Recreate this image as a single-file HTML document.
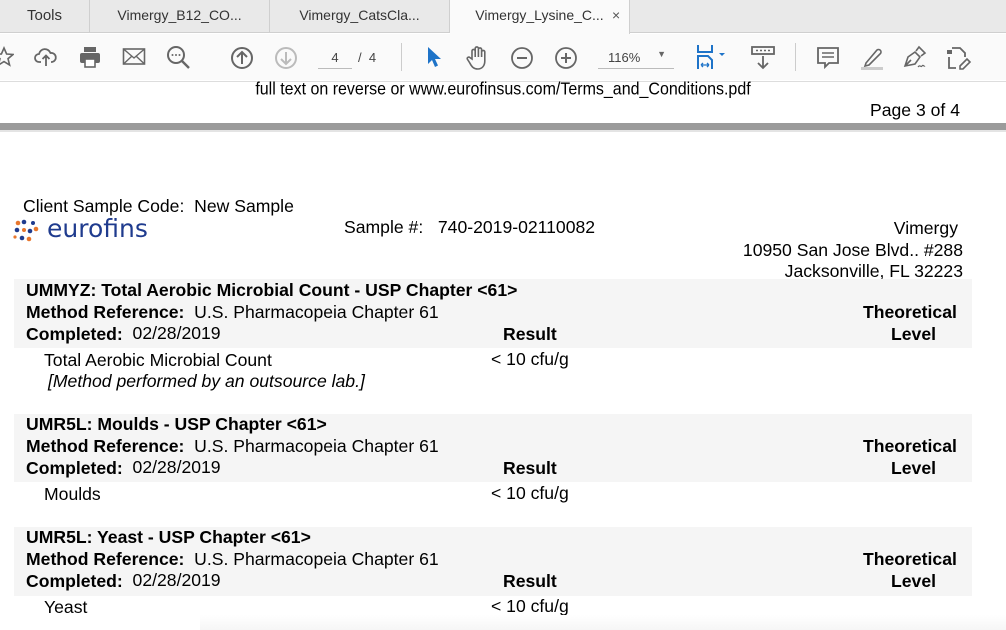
<!DOCTYPE html>
<html><head><meta charset="utf-8"><style>
body{margin:0;width:1006px;height:630px;overflow:hidden;background:#fff;font-family:"Liberation Sans",Arial,sans-serif;position:relative}
.a{position:absolute;white-space:nowrap}
.t{font-size:17.6px;color:#000;line-height:22px}
.b{font-weight:bold}
.tab{position:absolute;top:0;height:33px;line-height:31px;font-size:14px;color:#333;text-align:center;border-right:1px solid #cfcfcf;box-sizing:border-box}
.band{position:absolute;left:14px;width:958px;background:#f5f5f5}
svg{position:absolute}
</style></head><body>
<div class="a" style="left:0;top:0;width:1006px;height:33px;background:#e9e9e9;border-bottom:1px solid #cfcfcf;box-sizing:border-box"></div>
<div class="tab" style="left:0;width:90px;font-size:15px">Tools</div>
<div class="tab" style="left:90px;width:180px">Vimergy_B12_CO...</div>
<div class="tab" style="left:270px;width:180px">Vimergy_CatsCla...</div>
<div class="tab" style="left:450px;width:180px;background:#fafafa;height:34px;border-right:1px solid #cfcfcf">Vimergy_Lysine_C... <span style="position:absolute;left:162px;color:#555">×</span></div>
<div class="a" style="left:0;top:34px;width:1006px;height:46px;background:#fafafa"></div>
<svg style="left:-6px;top:46px" width="20" height="22" viewBox="0 0 20 22"><path d="M10 2l2.6 6 6.4.5-5 4.2 1.6 6.3L10 15.6 4.4 19l1.6-6.3-5-4.2 6.4-.5z" fill="none" stroke="#666" stroke-width="1.6"/></svg>
<svg style="left:34px;top:45px" width="24" height="24" viewBox="0 0 24 24"><path d="M7 17H5a4 4 0 010-8 6 6 0 0111.5-1A4.5 4.5 0 0118 17h-1M12 21V11M8.5 14l3.5-3.5 3.5 3.5" fill="none" stroke="#666" stroke-width="1.8"/></svg>
<svg style="left:78px;top:45px" width="24" height="24" viewBox="0 0 24 24"><rect x="6" y="2" width="12" height="5" fill="#666"/><rect x="2" y="8" width="20" height="10" rx="2" fill="#666"/><rect x="7" y="14" width="10" height="8" fill="#fff" stroke="#666" stroke-width="1.6"/></svg>
<svg style="left:122px;top:46px" width="24" height="22" viewBox="0 0 24 22"><rect x="1.5" y="3" width="21" height="15" fill="none" stroke="#666" stroke-width="1.6"/><path d="M1.5 3l10.5 9 10.5-9M1.5 18l8-7.5M22.5 18l-8-7.5" fill="none" stroke="#666" stroke-width="1.4"/></svg>
<svg style="left:166px;top:45px" width="26" height="26" viewBox="0 0 26 26"><circle cx="10" cy="10" r="8" fill="none" stroke="#666" stroke-width="2"/><path d="M16 16l7 7" stroke="#666" stroke-width="2.4"/><circle cx="6.5" cy="10" r="1" fill="#666"/><circle cx="10" cy="10" r="1" fill="#666"/><circle cx="13.5" cy="10" r="1" fill="#666"/></svg>
<svg style="left:230px;top:46px" width="24" height="24" viewBox="0 0 24 24"><circle cx="12" cy="12" r="10" fill="none" stroke="#666" stroke-width="2"/><path d="M12 18V6M7 11l5-5 5 5" fill="none" stroke="#666" stroke-width="2"/></svg>
<svg style="left:274px;top:46px" width="24" height="24" viewBox="0 0 24 24"><circle cx="12" cy="12" r="10" fill="none" stroke="#bbb" stroke-width="2"/><path d="M12 6v12M7 13l5 5 5-5" fill="none" stroke="#bbb" stroke-width="2"/></svg>
<div class="a" style="left:318px;top:50px;width:34px;text-align:center;font-size:13px;color:#444;border-bottom:1px solid #bbb;padding-bottom:3px">4</div>
<div class="a" style="left:358px;top:50px;font-size:13px;color:#444">/&nbsp; 4</div>
<div class="a" style="left:401px;top:43px;width:1px;height:28px;background:#ccc"></div>
<svg style="left:426px;top:46px" width="16" height="22" viewBox="0 0 16 22"><path d="M2 1v17l4-4 3 7 3-1.5-3-6.5h6z" fill="#1e73c8"/></svg>
<svg style="left:466px;top:45px" width="24" height="26" viewBox="0 0 24 26"><path d="M6 14V6a1.6 1.6 0 013.2 0v6V3.5a1.6 1.6 0 013.2 0V12V4.5a1.6 1.6 0 013.2 0V12V7a1.6 1.6 0 013.2 0v9c0 5-3 8-7 8s-6-2-8-6l-2.5-4a1.5 1.5 0 012.5-1.5z" fill="none" stroke="#666" stroke-width="1.6"/></svg>
<svg style="left:510px;top:46px" width="24" height="24" viewBox="0 0 24 24"><circle cx="12" cy="12" r="10" fill="none" stroke="#666" stroke-width="1.8"/><path d="M7 12h10" stroke="#666" stroke-width="2"/></svg>
<svg style="left:554px;top:46px" width="24" height="24" viewBox="0 0 24 24"><circle cx="12" cy="12" r="10" fill="none" stroke="#666" stroke-width="1.8"/><path d="M7 12h10M12 7v10" stroke="#666" stroke-width="2"/></svg>
<div class="a" style="left:598px;top:50px;width:76px;font-size:13px;color:#444;border-bottom:1px solid #bbb;padding-bottom:3px;padding-left:10px;box-sizing:border-box">116%<span style="position:absolute;right:8px;top:-1px;font-size:9px;color:#666">▼</span></div>
<svg style="left:696px;top:44px" width="34" height="26" viewBox="0 0 34 26"><path d="M2 1v7h14V1M2 25V12h10l4 4v9" fill="none" stroke="#1e73c8" stroke-width="2"/><path d="M5 21h8M5 21l2-2M5 21l2 2M13 21l-2-2M13 21l-2 2" stroke="#1e73c8" stroke-width="1.3" fill="none"/><path d="M23 9h6l-3 3z" fill="#1e73c8"/></svg>
<svg style="left:751px;top:45px" width="24" height="26" viewBox="0 0 24 26"><rect x="1" y="2" width="22" height="7" fill="none" stroke="#666" stroke-width="1.8"/><path d="M5 5.5h2M9 5.5h2M13 5.5h2M17 5.5h2" stroke="#666" stroke-width="1.6"/><path d="M12 11v12M7 18l5 5 5-5" fill="none" stroke="#666" stroke-width="1.8"/></svg>
<div class="a" style="left:795px;top:43px;width:1px;height:28px;background:#ccc"></div>
<svg style="left:816px;top:46px" width="24" height="24" viewBox="0 0 24 24"><path d="M2 2h20v15h-9l-4 4v-4H2z" fill="none" stroke="#666" stroke-width="1.8"/><path d="M6 7h12M6 11h12" stroke="#666" stroke-width="1.4"/></svg>
<svg style="left:860px;top:45px" width="26" height="26" viewBox="0 0 26 26"><path d="M6 18l11-13a2.5 2.5 0 013.5 3.5L9 20l-4 1z" fill="none" stroke="#666" stroke-width="1.6"/><rect x="1" y="22" width="22" height="3" fill="#ccc"/></svg>
<svg style="left:902px;top:45px" width="26" height="26" viewBox="0 0 26 26"><path d="M3 21l3-9 7-5 5 5-5 7zM3 21l6-6M14 6l3-4 6 6-4 3" fill="none" stroke="#666" stroke-width="1.6"/><path d="M16 22c2-3 3 1 4-1s2 1 3 0" fill="none" stroke="#666" stroke-width="1.2"/></svg>
<svg style="left:946px;top:45px" width="26" height="26" viewBox="0 0 26 26"><rect x="1" y="5" width="5" height="4" fill="#666"/><path d="M6 3h8l5 5v4M3 12v11h7" fill="none" stroke="#666" stroke-width="1.8"/><path d="M14 21l7-7 3 3-7 7h-3z" fill="none" stroke="#666" stroke-width="1.6"/></svg>

<div class="a" style="left:0;top:81px;width:1006px;height:1px;background:#ddd"></div>
<div class="a" style="left:0;top:80px;width:1006px;text-align:center;font-size:16px;line-height:20px;transform:scaleY(1.08)">full text on reverse or www.eurofinsus.com/Terms_and_Conditions.pdf</div>
<div class="a" style="left:870px;top:99px;font-size:17.6px;line-height:22px">Page 3 of 4</div>
<div class="a" style="left:0;top:123px;width:1006px;height:7px;background:#9b9b9b"></div>
<div class="a" style="left:0;top:130px;width:1006px;height:2px;background:#e4e4e4"></div>

<div class="a t" style="left:23px;top:195px">Client Sample Code:&nbsp; New Sample</div>
<svg style="left:13px;top:218px" width="30" height="26" viewBox="0 0 30 26"><g fill="#1f3b8e"><circle cx="11" cy="4" r="2.3"/><circle cx="4" cy="12" r="2.3"/><circle cx="17" cy="13" r="2.3"/><circle cx="9" cy="20" r="2.3"/><circle cx="20" cy="5" r="2"/></g><g fill="#e8772e"><circle cx="5" cy="5" r="2.3"/><circle cx="23" cy="11" r="2.3"/><circle cx="11" cy="12" r="2"/><circle cx="16" cy="21" r="2.3"/><circle cx="2" cy="19" r="1.6"/></g></svg>
<div class="a" style="left:47px;top:213px;font-size:25px;color:#1f3b8e;font-family:'DejaVu Sans',sans-serif;line-height:32px">eurofins</div>
<div class="a t" style="left:344px;top:216px">Sample #:&nbsp;&nbsp; 740-2019-02110082</div>
<div class="a t" style="right:48px;top:217px;text-align:right">Vimergy</div>
<div class="a t" style="right:43px;top:239px;text-align:right">10950 San Jose Blvd.. #288</div>
<div class="a t" style="right:43px;top:260px;text-align:right">Jacksonville, FL 32223</div>

<div class="band" style="top:279px;height:69px"></div>
<div class="band" style="top:414px;height:68px"></div>
<div class="band" style="top:527px;height:69px"></div>

<div class="a t b" style="left:26px;top:279px">UMMYZ: Total Aerobic Microbial Count - USP Chapter &lt;61&gt;</div>
<div class="a t" style="left:26px;top:301px"><b>Method Reference:</b>&nbsp; U.S. Pharmacopeia Chapter 61</div>
<div class="a t" style="left:26px;top:322px"><b style="position:relative;top:1px">Completed:</b>&nbsp; 02/28/2019</div>
<div class="a t b" style="left:503px;top:323px">Result</div>
<div class="a t b" style="left:863px;top:301px">Theoretical</div>
<div class="a t b" style="left:891px;top:323px">Level</div>
<div class="a t" style="left:44px;top:349px">Total Aerobic Microbial Count</div>
<div class="a t" style="left:491px;top:348px">&lt; 10 cfu/g</div>
<div class="a t" style="left:48px;top:370px;font-style:italic">[Method performed by an outsource lab.]</div>

<div class="a t b" style="left:26px;top:413px">UMR5L: Moulds - USP Chapter &lt;61&gt;</div>
<div class="a t" style="left:26px;top:435px"><b>Method Reference:</b>&nbsp; U.S. Pharmacopeia Chapter 61</div>
<div class="a t" style="left:26px;top:456px"><b style="position:relative;top:1px">Completed:</b>&nbsp; 02/28/2019</div>
<div class="a t b" style="left:503px;top:457px">Result</div>
<div class="a t b" style="left:863px;top:435px">Theoretical</div>
<div class="a t b" style="left:891px;top:457px">Level</div>
<div class="a t" style="left:44px;top:483px">Moulds</div>
<div class="a t" style="left:491px;top:482px">&lt; 10 cfu/g</div>

<div class="a t b" style="left:26px;top:526px">UMR5L: Yeast - USP Chapter &lt;61&gt;</div>
<div class="a t" style="left:26px;top:548px"><b>Method Reference:</b>&nbsp; U.S. Pharmacopeia Chapter 61</div>
<div class="a t" style="left:26px;top:569px"><b style="position:relative;top:1px">Completed:</b>&nbsp; 02/28/2019</div>
<div class="a t b" style="left:503px;top:570px">Result</div>
<div class="a t b" style="left:863px;top:548px">Theoretical</div>
<div class="a t b" style="left:891px;top:570px">Level</div>
<div class="a t" style="left:44px;top:596px">Yeast</div>
<div class="a t" style="left:491px;top:595px">&lt; 10 cfu/g</div>
<div class="a" style="left:200px;top:615px;width:806px;height:15px;background:linear-gradient(#fff,#f6f6f6)"></div>
</body></html>
